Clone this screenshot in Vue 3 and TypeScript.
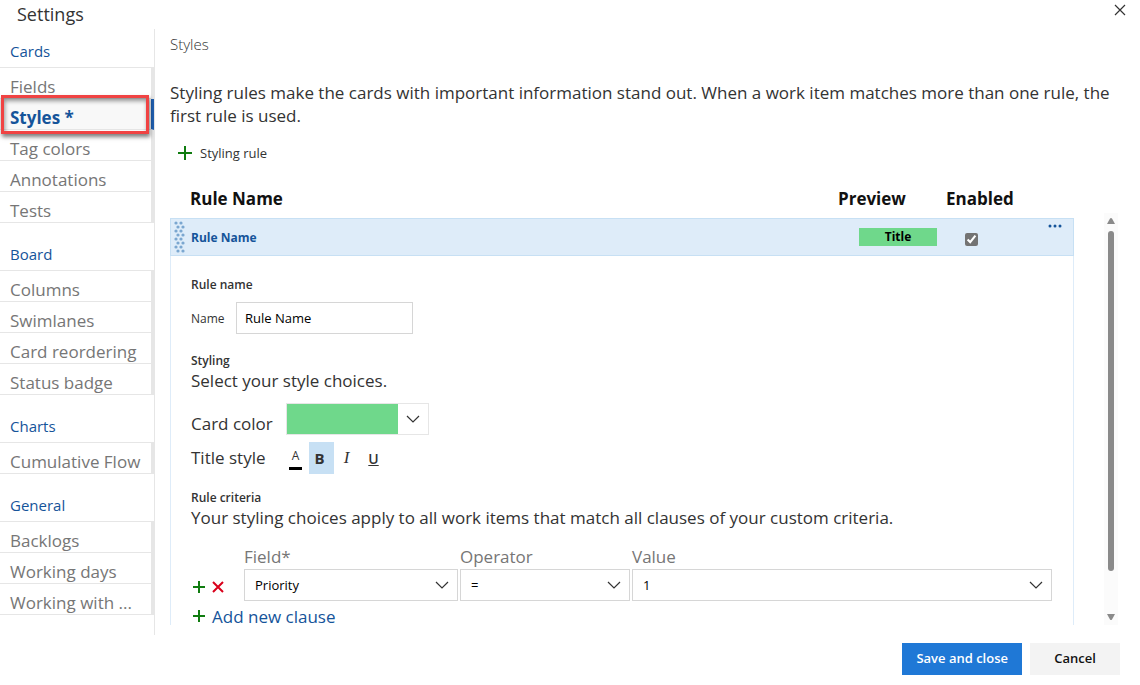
<script setup lang="ts">
import { ref } from 'vue'

interface NavGroup {
  title: string
  items: string[]
}

const groups: NavGroup[] = [
  { title: 'Cards', items: ['Fields', 'Styles *', 'Tag colors', 'Annotations', 'Tests'] },
  { title: 'Board', items: ['Columns', 'Swimlanes', 'Card reordering', 'Status badge'] },
  { title: 'Charts', items: ['Cumulative Flow'] },
  { title: 'General', items: ['Backlogs', 'Working days', 'Working with ...'] },
]

const active = ref('Styles *')
const ruleName = ref('Rule Name')
const enabled = ref(true)
const bold = ref(true)
const italic = ref(false)
const underline = ref(false)
const field = ref('Priority')
const operator = ref('=')
const value = ref('1')
</script>

<template>
  <div class="dialog">
    <header class="top">
      <h1>Settings</h1>
      <button class="close" type="button" aria-label="Close">
        <svg width="12" height="12" viewBox="0 0 12 12"><path d="M1 1 11 11M11 1 1 11" /></svg>
      </button>
    </header>

    <div class="body">
      <nav class="side" aria-label="Settings">
        <section v-for="g in groups" :key="g.title" class="group">
          <h2>{{ g.title }}</h2>
          <a
            v-for="i in g.items"
            :key="i"
            href="#"
            :class="{ selected: i === active }"
            @click.prevent="active = i"
          >{{ i }}</a>
        </section>
      </nav>

      <main class="main">
        <h2 class="page-title">Styles</h2>
        <p class="intro">
          Styling rules make the cards with important information stand out. When a work item matches more than one rule, the first rule is used.
        </p>
        <button class="add-rule" type="button">
          <svg class="plus" width="14" height="14" viewBox="0 0 14 14"><path d="M7 0V14M0 7H14" /></svg>
          Styling rule
        </button>

        <div class="rules">
          <table class="rule-table">
            <thead>
              <tr>
                <th class="c-name" scope="col">Rule Name</th>
                <th class="c-preview" scope="col">Preview</th>
                <th class="c-enabled" scope="col">Enabled</th>
              </tr>
            </thead>
            <tbody>
              <tr class="rule-row">
                <td>
                  <div class="name-cell">
                    <svg class="grip" width="11" height="32" viewBox="0 0 11 32">
                      <template v-for="n in 8" :key="n">
                        <circle :cx="n % 2 ? 2 : 4" :cy="n * 4 - 2" r="1.6" />
                        <circle :cx="n % 2 ? 7 : 9" :cy="n * 4 - 2" r="1.6" />
                      </template>
                    </svg>
                    <span>{{ ruleName }}</span>
                  </div>
                </td>
                <td><span class="chip">Title</span></td>
                <td>
                  <div class="enabled-cell">
                    <input v-model="enabled" type="checkbox" aria-label="Enabled" />
                    <button class="more" type="button" aria-label="More actions">
                      <svg width="14" height="4" viewBox="0 0 14 4">
                        <circle cx="2" cy="2" r="1.5" /><circle cx="7" cy="2" r="1.5" /><circle cx="12" cy="2" r="1.5" />
                      </svg>
                    </button>
                  </div>
                </td>
              </tr>
              <tr>
                <td class="detail" colspan="3">
                  <h3>Rule name</h3>
                  <div class="name-row">
                    <label for="rule-name">Name</label>
                    <input id="rule-name" v-model="ruleName" type="text" />
                  </div>

                  <h3 class="styling">Styling</h3>
                  <p>Select your style choices.</p>
                  <div class="style-row color-row">
                    <span class="style-label">Card color</span>
                    <button class="color" type="button" aria-label="Card color">
                      <span class="swatch"></span>
                      <svg class="chev" width="14" height="8" viewBox="0 0 14 8"><path d="M1 1 7 7 13 1" /></svg>
                    </button>
                  </div>
                  <div class="style-row title-row">
                    <span class="style-label">Title style</span>
                    <button class="fmt font-color" type="button" aria-label="Font color"><span>A</span></button>
                    <button class="fmt b" :class="{ on: bold }" type="button" @click="bold = !bold">B</button>
                    <button class="fmt i" :class="{ on: italic }" type="button" @click="italic = !italic">I</button>
                    <button class="fmt u" :class="{ on: underline }" type="button" @click="underline = !underline">U</button>
                  </div>

                  <h3 class="criteria">Rule criteria</h3>
                  <p>Your styling choices apply to all work items that match all clauses of your custom criteria.</p>
                  <div class="clauses">
                    <span></span>
                    <label for="field">Field*</label>
                    <label for="operator">Operator</label>
                    <label for="value">Value</label>
                    <div class="clause-tools">
                      <button type="button" aria-label="Insert clause">
                        <svg class="plus" width="12" height="12" viewBox="0 0 12 12"><path d="M6 0V12M0 6H12" /></svg>
                      </button>
                      <button type="button" aria-label="Remove clause">
                        <svg class="cross" width="12" height="12" viewBox="0 0 12 12"><path d="M1 1 11 11M11 1 1 11" /></svg>
                      </button>
                    </div>
                    <div class="combo">
                      <select id="field" v-model="field"><option>Priority</option></select>
                      <svg class="chev" width="14" height="8" viewBox="0 0 14 8"><path d="M1 1 7 7 13 1" /></svg>
                    </div>
                    <div class="combo">
                      <select id="operator" v-model="operator"><option>=</option></select>
                      <svg class="chev" width="14" height="8" viewBox="0 0 14 8"><path d="M1 1 7 7 13 1" /></svg>
                    </div>
                    <div class="combo">
                      <select id="value" v-model="value"><option>1</option></select>
                      <svg class="chev" width="14" height="8" viewBox="0 0 14 8"><path d="M1 1 7 7 13 1" /></svg>
                    </div>
                  </div>
                  <button class="add-clause" type="button">
                    <svg class="plus" width="12" height="12" viewBox="0 0 12 12"><path d="M6 0V12M0 6H12" /></svg>
                    Add new clause
                  </button>
                </td>
              </tr>
            </tbody>
          </table>
          <div class="scrollbar" aria-hidden="true">
            <svg width="10" height="8" viewBox="0 0 10 8"><path d="M1 7 4 1.600Q5 0.500 6 1.600L9 7Z" /></svg>
            <div class="thumb"></div>
            <svg width="10" height="8" viewBox="0 0 10 8"><path d="M1 1 4 6.400Q5 7.500 6 6.400L9 1Z" /></svg>
          </div>
        </div>
      </main>
    </div>

    <footer class="actions">
      <button class="primary" type="button">Save and close</button>
      <button type="button">Cancel</button>
    </footer>
  </div>
</template>

<style>
body {
  margin: 0;
  background: #fff;
}
</style>

<style scoped>
.dialog,
.dialog * {
  box-sizing: border-box;
}
.dialog {
  font-family: 'Open Sans', 'Noto Sans', sans-serif;
  font-size: 17px;
  font-weight: 400;
  color: #333;
}
h1,
h2,
h3,
p {
  margin: 0;
  font-weight: inherit;
}
button {
  margin: 0;
  padding: 0;
  border: 0;
  background: none;
  font: inherit;
  color: inherit;
  cursor: pointer;
}
svg {
  display: block;
  flex: none;
  fill: none;
}

.top {
  display: flex;
  justify-content: space-between;
  height: 29px;
  padding: 0 14px 0 17px;
}
h1 {
  font-size: 18px;
  line-height: 28px;
}
.close {
  align-self: flex-start;
  padding-top: 4px;
}
.close svg {
  stroke: #333;
  stroke-width: 1.2;
}

.body {
  display: flex;
}
.side {
  flex: none;
  width: 155px;
  padding-bottom: 20px;
  border-right: 1px solid #e6e6e6;
}
.group h2 {
  height: 48px;
  padding: 19px 10px 0;
  border-bottom: 1px solid #e6e6e6;
  font-size: 15px;
  line-height: 24px;
  color: #15549a;
}
.group:first-child h2 {
  height: 39px;
  padding-top: 10px;
}
.side a {
  position: relative;
  display: block;
  height: 31px;
  padding: 8px 0 0 10px;
  border-bottom: 1px solid #e6e6e6;
  border-right: 3px solid #e6e6e6;
  font-size: 17px;
  line-height: 22px;
  color: #767676;
  text-decoration: none;
  white-space: nowrap;
}
.side a.selected {
  background: #f8f8f8;
  border-right-color: #1f5fb0;
  font-weight: 700;
  color: #15549a;
}
.side a.selected::after {
  content: '';
  position: absolute;
  inset: -4px 2px -5px 1px;
  z-index: 1;
  border: 3px solid #f04343;
  box-shadow: 1px 3px 4px rgba(0, 0, 0, 0.5), inset 1px 3px 4px rgba(0, 0, 0, 0.4);
}

.main {
  flex: 1;
  min-width: 0;
  padding: 3px 22px 0 15px;
}
.page-title {
  font-size: 15px;
  line-height: 24px;
  font-weight: 300;
}
.intro {
  margin: 25px 0 15px;
  line-height: 23px;
}
.add-rule {
  display: flex;
  align-items: center;
  gap: 8px;
  height: 22px;
  padding-left: 8px;
  font-size: 13px;
}
.plus {
  stroke: #107c10;
  stroke-width: 2;
}
.cross {
  stroke: #d9001b;
  stroke-width: 2;
}

.rules {
  display: flex;
  gap: 30px;
  margin-top: 16px;
}
.rule-table {
  flex: 1;
  min-width: 0;
  table-layout: fixed;
  border-spacing: 0;
}
th,
td {
  padding: 0;
  text-align: left;
}
th {
  height: 38px;
  padding-bottom: 2px;
  font-size: 17px;
  font-weight: 700;
  color: #111;
}
.c-name {
  padding-left: 20px;
}
.c-preview {
  width: 108px;
}
.c-enabled {
  width: 128px;
}
.rule-row td {
  height: 38px;
  border: solid #c7e0f4;
  border-width: 1px 0;
  background: #deecf9;
}
.rule-row td:first-child {
  border-left-width: 1px;
}
.rule-row td:last-child {
  border-right-width: 1px;
}
.name-cell {
  display: flex;
  align-items: center;
  gap: 6px;
  padding-left: 3px;
  font-size: 12px;
  font-weight: 700;
  color: #15549a;
}
.grip {
  fill: #7ba7d0;
}
.chip {
  display: block;
  width: 78px;
  margin-left: 21px;
  background: #6fd88b;
  font-size: 12px;
  line-height: 18px;
  font-weight: 700;
  text-align: center;
  color: #000;
}
.enabled-cell {
  display: flex;
  justify-content: space-between;
  align-items: flex-start;
  height: 28px;
  padding: 0 11px 0 19px;
}
.enabled-cell input {
  width: 13px;
  height: 13px;
  margin: 10px 0 0;
  accent-color: #737373;
}
.more {
  padding-top: 1px;
}
.more svg {
  fill: #15549a;
}

.detail {
  padding: 18px 21px 0 20px;
  border: solid #deecf9;
  border-width: 0 1px;
}
h3 {
  height: 20px;
  font-size: 12px;
  line-height: 22px;
  font-weight: 600;
}
.detail p {
  line-height: 22px;
}
.name-row {
  display: flex;
  align-items: center;
  gap: 13px;
  margin-top: 8px;
}
.name-row label {
  width: 32px;
  font-size: 12px;
}
.name-row input {
  width: 177px;
  height: 32px;
  padding: 0 8px;
  border: 1px solid #d6d6d6;
  background: #fff;
  font: inherit;
  font-size: 13px;
  color: #000;
}
.styling {
  margin-top: 16px;
}
.style-row {
  display: flex;
  height: 32px;
  align-items: center;
}
.color-row {
  margin-top: 11px;
}
.title-row {
  margin-top: 7px;
}
.style-label {
  width: 95px;
}
.color-row .style-label {
  padding-top: 8px;
}
.title-row .style-label {
  padding-bottom: 2px;
}
.color {
  display: flex;
  align-items: center;
  width: 143px;
  height: 32px;
  border: 1px solid #e6e6e6;
}
.swatch {
  width: 111px;
  height: 30px;
  margin-right: 8px;
  background: #6fd88b;
}
.chev {
  stroke: #333;
  stroke-width: 1.2;
}
.fmt {
  width: 25px;
  height: 32px;
  margin-right: 2px;
  font-size: 15px;
}
.fmt.on {
  background: #c7e0f4;
}
.font-color {
  width: 13px;
  height: 20px;
  margin: 4px 7px 0 3px;
  border-bottom: 3px solid #000;
  font-size: 12px;
  line-height: 12px;
}
.font-color span {
  display: block;
  height: 17px;
}
.b {
  padding-right: 4px;
  font-weight: 700;
}
.i {
  padding-right: 4px;
  font-family: 'Liberation Serif', serif;
  font-size: 17px;
  font-style: italic;
}
.u {
  padding-right: 4px;
  font-size: 14px;
  font-weight: 600;
  text-decoration: underline;
}
.criteria {
  margin-top: 13px;
}
.clauses {
  display: grid;
  grid-template-columns: 51px 214px 170px 1fr;
  column-gap: 2px;
  align-items: center;
  margin-top: 16px;
}
.clauses label {
  font-weight: 500;
  line-height: 24px;
  color: #767676;
}
.clause-tools {
  display: flex;
  gap: 7px;
  padding: 4px 0 0 2px;
}
.combo {
  display: grid;
  align-items: center;
}
.combo > * {
  grid-area: 1 / 1;
}
.combo select {
  width: 100%;
  height: 32px;
  padding: 0 10px;
  border: 1px solid #d6d6d6;
  border-radius: 0;
  appearance: none;
  background: #fff;
  font: inherit;
  font-size: 13px;
  color: #000;
}
.combo .chev {
  justify-self: end;
  margin-right: 9px;
  pointer-events: none;
}
.add-clause {
  display: flex;
  align-items: center;
  gap: 7px;
  height: 24px;
  margin: 3px 0 -3px;
  padding-left: 2px;
  color: #15549a;
}

.scrollbar {
  display: flex;
  flex-direction: column;
  align-items: center;
  width: 14px;
  margin-top: 33px;
  padding: 4px 0;
  background: #fbfbfb;
}
.scrollbar svg {
  fill: #8a8a8a;
}
.thumb {
  flex: 1;
  width: 6px;
  margin: 6px 0 42px;
  border-radius: 3px;
  background: #8a8a8a;
}

.actions {
  display: flex;
  justify-content: flex-end;
  gap: 8px;
  padding: 8px 20px 10px;
}
.actions button {
  min-width: 90px;
  height: 32px;
  padding: 0 14px 2px;
  background: #f3f3f3;
  font-size: 13px;
  font-weight: 600;
  color: #111;
}
.actions .primary {
  background: #1f78d6;
  color: #fff;
}
</style>
